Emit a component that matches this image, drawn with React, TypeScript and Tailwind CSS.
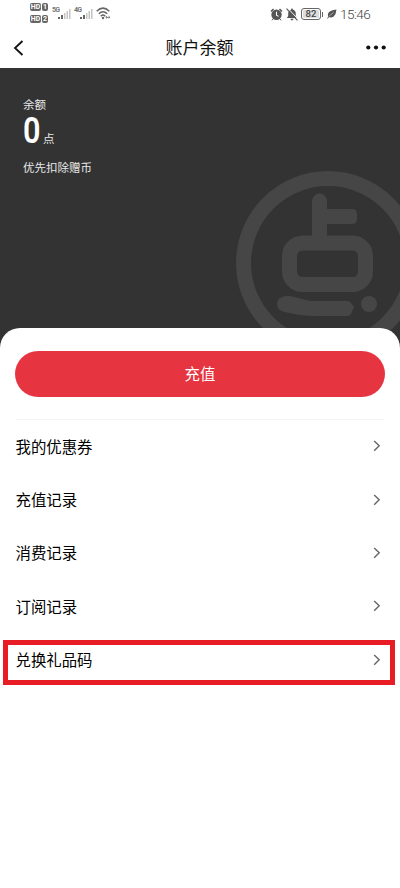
const records = [
  { label: "我的优惠券" },
  { label: "充值记录" },
  { label: "消费记录" },
  { label: "订阅记录" },
  { label: "兑换礼品码", highlighted: true },
];

function HdBadge({ sim }: { sim: string }) {
  return (
    <div className="flex gap-px font-['Roboto',sans-serif] text-[7px] leading-[8px] font-bold text-white">
      <span className="w-[11px] h-[8px] rounded-[2px] bg-[#666] text-center">
        HD
      </span>
      <span className="w-[6px] h-[8px] rounded-[2px] bg-[#666] text-center">
        {sim}
      </span>
    </div>
  );
}

function Signal({ label }: { label: string }) {
  return (
    <div className="flex w-[19px]">
      <span className="w-[6px] font-['Roboto',sans-serif] text-[7px] leading-[7px] font-bold tracking-[-0.8px] text-[#777]">
        {label}
      </span>
      <svg width="13" height="13" viewBox="0 0 13 13">
        <path d="M0 10h2v2H0zM3 8h2v4H3z" fill="#666" />
        <path d="M6 6h1.500v6H6zM8.500 4H10v8H8.500zM11 2h1.500v10H11z" fill="#c4c4c4" />
      </svg>
    </div>
  );
}

function StatusBar() {
  return (
    <div className="h-7 flex items-start justify-between pl-[30px] pr-[29px] text-[#666]">
      <div className="flex items-start">
        <div className="flex flex-col gap-[4px] pt-[3px]">
          <HdBadge sim="1" />
          <HdBadge sim="2" />
        </div>
        <div className="flex gap-[3px] pl-[4px] pt-[7px]">
          <Signal label="5G" />
          <Signal label="4G" />
        </div>
        <svg
          className="ml-[3px] mt-[7px]"
          width="15"
          height="13"
          viewBox="0 0 15 13"
          fill="none"
          stroke="#666"
          strokeWidth="1.500"
        >
          <path d="M.7 4.200Q7 -2 13.300 4.200M2.800 6.800Q7 2.700 11.200 6.800M4.800 9.200Q7 7 9.200 9.200" />
          <circle cx="7" cy="11" r="1.200" fill="#666" stroke="none" />
          <path d="M9.800 10.300h4.200M11 9.200l-1.200 1.100 1.200 1.100M12.700 9.200l1.200 1.100-1.200 1.100" strokeWidth=".8" />
        </svg>
      </div>
      <div className="flex items-center pt-[4px]">
        {/* Alarm */}
        <svg width="13" height="13" viewBox="0 0 13 13" fill="none">
          <path d="M1 3.500 3.500 1M12 3.500 9.500 1" stroke="#555" strokeWidth="1.500" />
          <circle cx="6.500" cy="6.800" r="5.200" fill="#555" />
          <path d="M6.500 3.800v3.300l2 1.300" stroke="#fff" strokeWidth="1.100" />
          <path d="m3 11-1 1.300M10 11l1 1.300" stroke="#555" />
        </svg>
        {/* Muted bell */}
        <svg className="ml-[3px]" width="12" height="13" viewBox="0 0 12 13">
          <path
            d="M6 .5q1 0 1 1.200 2.800.8 2.800 4V8l1.400 2H.8l1.400-2V5.700q0-3.200 2.800-4Q5 .5 6 .5zM4.300 10.800h3.400Q7 12.500 6 12.500t-1.700-1.700z"
            fill="#555"
          />
          <path d="m1.500 0 10.500 11" stroke="#fff" strokeWidth="1" />
          <path d="m.5.700 11 11.600" stroke="#555" strokeWidth="1.100" />
        </svg>
        <div className="ml-[3px] w-[20px] h-[12px] rounded-[3px] border border-[#666] p-px">
          <div className="h-full rounded-[1px] bg-[#ddd] text-center font-['Roboto',sans-serif] text-[9.500px] leading-[8px] font-medium text-[#444]">
            82
          </div>
        </div>
        <div className="ml-px w-px h-[5px] bg-[#666]" />
        <svg className="ml-[4px]" width="10" height="10" viewBox="0 0 10 10">
          <path d="M9.500.5Q3 1 1.300 4 .3 6 1.300 8q3.400 1 5.400-.5Q9.200 5 9.500.5z" fill="#555" />
          <path d="M2 7.500Q4 5 6.500 3.500" fill="none" stroke="#fff" strokeWidth=".5" />
          <path d="m.3 9.500 1.700-2" stroke="#555" />
        </svg>
        <span className="ml-[3px] w-[31px] font-['Roboto',sans-serif] text-[13.500px] leading-[20px] tracking-[-0.500px] font-light whitespace-nowrap text-[#444]">
          15:46
        </span>
      </div>
    </div>
  );
}

function CoinWatermark() {
  return (
    <svg
      className="absolute left-[236px] top-[102px]"
      width="184"
      height="184"
      viewBox="236 170 184 184"
      fill="none"
      stroke="#464646"
      strokeWidth="15"
      strokeLinecap="round"
      strokeLinejoin="round"
    >
      <circle cx="328" cy="263" r="84.500" />
      <path d="M319.500 201v39" />
      <path d="M322 209h30q5 0 5 5v5q0 5-5 5h-30z" fill="#464646" stroke="none" />
      <rect x="289.500" y="243" width="76" height="41.500" rx="13" />
      <path
        d="M286 296h4l20 5h37q3 0 4 2l3 4-3 7q-1 2-4 2h-32q-15 0-32-4.500-6-2-6-7.500 0-7 9-8z"
        fill="#464646"
        stroke="none"
      />
      <circle cx="369" cy="304" r="8" fill="#464646" stroke="none" />
    </svg>
  );
}

function RecordRow({ label, highlighted }: { label: string; highlighted?: boolean }) {
  return (
    <div className="relative h-[53.400px] flex items-center justify-between pl-[15.500px] pr-[19px]">
      <span className="pb-[2px] text-[15.400px] leading-6 font-normal text-black">{label}</span>
      <svg className="mb-px" width="8" height="12" viewBox="0 0 8 12" fill="none" stroke="#666" strokeWidth="1.400">
        <path d="m1.200 1 5 4.800-5 4.900" />
      </svg>
      {highlighted && (
        <div className="absolute left-[3px] right-[5px] top-[6px] h-[45px] border-5 border-[#e81c24]" />
      )}
    </div>
  );
}

export default function App() {
  return (
    <div className="w-[400px] h-[888px] overflow-hidden bg-white font-['Noto_Sans_CJK_SC',sans-serif]">
      <StatusBar />
      <header className="h-10 flex items-center justify-between pl-[13px] pr-[14px]">
        <svg width="11" height="16" viewBox="0 0 11 16" fill="none" stroke="#111" strokeWidth="1.800">
          <path d="M9.500 1 2 8l7.500 7" />
        </svg>
        <h1 className="pl-[9px] pb-[2px] text-[17px] leading-6 font-normal text-[#111]">账户余额</h1>
        <svg width="20" height="6" viewBox="0 0 20 6" fill="#111">
          <circle cx="2.300" cy="2.500" r="2.100" />
          <circle cx="10" cy="2.500" r="2.100" />
          <circle cx="17.700" cy="2.500" r="2.100" />
        </svg>
      </header>

      {/* Balance */}
      <section className="relative h-[284px] overflow-hidden bg-[#333] pl-[23px] pt-[28px] text-[#e8e8e8]">
        <CoinWatermark />
        <div className="text-[11.500px] leading-4">余额</div>
        <div className="flex items-baseline h-[38px]">
          <span className="inline-block w-[20px] origin-left scale-x-85 font-['Roboto',sans-serif] text-[36px] leading-[38px] font-semibold text-white">
            0
          </span>
          <span className="text-[11.500px] leading-4">点</span>
        </div>
        <div className="mt-[8px] text-[11.500px] leading-[18px]">优先扣除赠币</div>
      </section>

      <section className="relative -mt-6 rounded-t-[20px] bg-white pt-[23px]">
        <button className="block mx-[15px] w-[370px] h-[46px] rounded-full bg-[#e63540] text-[15.400px] text-white">
          充值
        </button>
        <div className="mx-4 mt-[22px] h-px bg-[#f8f4f5]" />
        {records.map((r) => (
          <RecordRow key={r.label} label={r.label} highlighted={r.highlighted} />
        ))}
      </section>
    </div>
  );
}
